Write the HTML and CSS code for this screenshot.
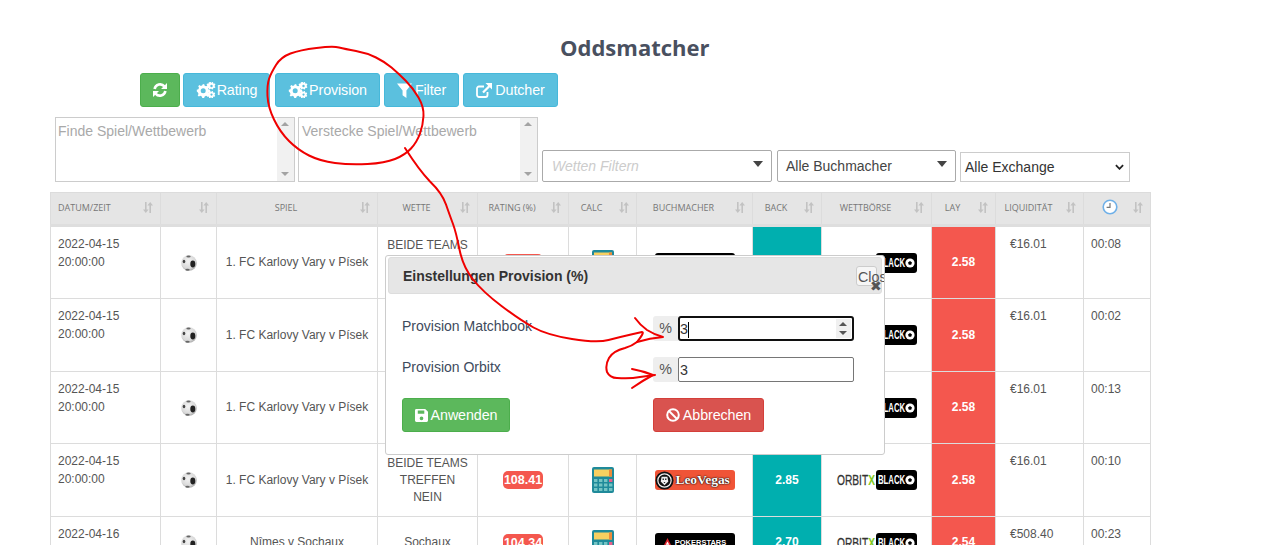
FILE: index.html
```html
<!DOCTYPE html>
<html lang="de">
<head>
<meta charset="utf-8">
<title>Oddsmatcher</title>
<link rel="stylesheet" href="styles.css">
</head>
<body>
<svg width="0" height="0" class="defs">
  <defs>
    <radialGradient id="ballfill" cx="45%" cy="40%" r="65%">
      <stop offset="0" stop-color="#f4f4f4"/>
      <stop offset="0.7" stop-color="#d9d9d9"/>
      <stop offset="1" stop-color="#9a9a9a"/>
    </radialGradient>
  </defs>
  <symbol id="calc" viewBox="0 0 22 26">
    <rect width="22" height="26" rx="2" fill="#1f8a9a"/>
    <rect x="2" y="2.500" width="18" height="7" fill="#f8d060"/>
    <rect x="17" y="2.500" width="3" height="7" fill="#ee8a3a"/>
    <g fill="#74c4c4">
      <rect x="2" y="12" width="3.400" height="3"/><rect x="7" y="12" width="3.400" height="3"/><rect x="12" y="12" width="3.400" height="3"/>
      <rect x="2" y="16.500" width="3.400" height="3"/><rect x="7" y="16.500" width="3.400" height="3"/><rect x="12" y="16.500" width="3.400" height="3"/><rect x="17" y="16.500" width="3.400" height="3"/>
      <rect x="2" y="21" width="3.400" height="3"/><rect x="7" y="21" width="3.400" height="3"/><rect x="12" y="21" width="3.400" height="3"/><rect x="17" y="21" width="3.400" height="3"/>
    </g>
    <rect x="17" y="12" width="3.400" height="3" fill="#e8608a"/>
  </symbol>
  <symbol id="ball" viewBox="0 0 16 16">
    <circle cx="8" cy="8" r="7.800" fill="url(#ballfill)"/>
    <ellipse cx="11.800" cy="9" rx="2.500" ry="3.400" fill="#222"/>
    <ellipse cx="3" cy="6.500" rx="1.300" ry="1.800" fill="#444"/>
    <ellipse cx="7.500" cy="1.500" rx="2.200" ry="1" fill="#666"/>
    <ellipse cx="6.500" cy="14.700" rx="2.200" ry="1" fill="#666"/>
  </symbol>
  <symbol id="gears" viewBox="0 0 20 16">
    <path fill="currentColor" d="M6.500 2.500l1.600-.4.6 1.600 1.400.6 1.500-.8 1.200 1.200-.8 1.500.6 1.400 1.600.6v1.800l-1.600.5-.6 1.400.8 1.500-1.200 1.200-1.500-.8-1.400.6-.6 1.500H6.300l-.5-1.500-1.400-.6-1.500.8-1.200-1.200.8-1.500-.6-1.400L.8 9.600V7.800l1.600-.6.6-1.400-.8-1.500 1.200-1.200 1.500.8 1.400-.6zM7.200 6.200a2.500 2.500 0 1 0 0 5 2.500 2.500 0 0 0 0-5z"/>
    <path fill="currentColor" d="M16 0l1.100.3.1 1 .7.5 1-.2.5 1-.7.8v.8l.7.8-.5 1-1-.2-.7.5-.1 1-1.100.3-.6-.8h-.9l-.6.8-1.100-.3-.1-1-.7-.5-.9.2-.5-1 .6-.8v-.8l-.6-.8.5-1 .9.2.7-.5.1-1L14.900 0l.6.8h.5zM15.500 2.800a1.200 1.200 0 1 0 0 2.400 1.200 1.200 0 0 0 0-2.400z"/>
    <path fill="currentColor" d="M16 9l1 .3.1.9.7.5.9-.2.5 1-.6.7v.8l.6.7-.5 1-.9-.2-.7.5-.1.9-1 .3-.6-.7h-.7l-.6.7-1-.3-.1-.9-.7-.5-.9.2-.5-1 .6-.7v-.8l-.6-.7.5-1 .9.2.7-.5.1-.9 1-.3.6.7h.7zM15.500 11.500a1.100 1.100 0 1 0 0 2.200 1.100 1.100 0 0 0 0-2.200z"/>
  </symbol>
  <symbol id="sort" viewBox="0 0 10 11">
    <path fill="none" stroke="currentColor" stroke-width="1.600" d="M2.800 0v8.500M7.200 2.500V11"/>
    <path fill="currentColor" d="M0 7.500h5.600L2.800 11zM4.400 3.500h5.600L7.200 0z"/>
  </symbol>
  <symbol id="soccer" viewBox="0 0 10 10">
    <circle cx="5" cy="5" r="4.600" fill="#fff"/>
    <path fill="#000" d="M5 3l2 1.400-.8 2.300H3.800L3 4.400z"/>
  </symbol>
  <symbol id="spade" viewBox="0 0 10 10">
    <path fill="#e0222a" d="M5 0l5 10H0z"/>
    <path fill="#fff" d="M5 4l2 3.500H3z"/>
  </symbol>
  <symbol id="lion" viewBox="0 0 20 20">
    <circle cx="10" cy="10" r="9.500" fill="#111"/>
    <circle cx="10" cy="10" r="7" fill="none" stroke="#eee" stroke-width="1.300"/>
    <path fill="#eee" d="M7 6h6l1 5-4 4-4-4z"/>
    <path fill="#111" d="M8 8h1.300v1.500H8zM10.700 8H12v1.500h-1.300zM9 11.500h2L10 13z"/>
  </symbol>
</svg>

<main class="page">
  <h1 class="title">Oddsmatcher</h1>
  <div class="toolbar">
    <button class="btn btn-green btn-refresh" type="button" aria-label="Aktualisieren">
      <svg viewBox="0 0 16 16" width="16" height="16"><path fill="none" stroke="currentColor" stroke-width="2.600" d="M2.600 7a5.600 5.600 0 0 1 9.800-2.600M13.400 9a5.600 5.600 0 0 1-9.800 2.600"/><path fill="currentColor" d="M15 1v6h-6zM1 15V9h6z"/></svg>
    </button>
    <button class="btn btn-blue btn-rating" type="button"><svg class="ico-gears"><use href="#gears"/></svg>Rating</button>
    <button class="btn btn-blue btn-provision" type="button"><svg class="ico-gears"><use href="#gears"/></svg>Provision</button>
    <button class="btn btn-blue btn-filter" type="button">
      <svg class="ico-filter" viewBox="0 0 14 14" width="15" height="15"><path fill="currentColor" d="M0 .5h14L8.800 7v7L5.200 11.500V7z"/></svg>Filter</button>
    <button class="btn btn-blue btn-dutcher" type="button">
      <svg class="ico-ext" viewBox="0 0 16 15" width="16" height="15"><path fill="none" stroke="currentColor" stroke-width="1.800" d="M11.500 9v3a2 2 0 0 1-2 2H3a2 2 0 0 1-2-2V5.500a2 2 0 0 1 2-2h5"/><path fill="currentColor" d="M9.500 0H16v6.500l-2.200-2.200-6 6-1.600-1.600 6-6z"/></svg>Dutcher</button>
  </div>

  <div class="filters">
    <div class="area"><span>Finde Spiel/Wettbewerb</span><span class="scroll"><i class="up"></i><i class="down"></i></span></div>
    <div class="area area-hide"><span>Verstecke Spiel/Wettbewerb</span><span class="scroll"><i class="up"></i><i class="down"></i></span></div>
    <div class="dd dd-wetten"><em>Wetten Filtern</em><i class="caret"></i></div>
    <div class="dd dd-buch"><span>Alle Buchmacher</span><i class="caret"></i></div>
    <div class="dd dd-ex"><span>Alle Exchange</span><svg viewBox="0 0 10 6" width="9" height="6"><path fill="none" stroke="#222" stroke-width="2" d="M1 1l4 4 4-4"/></svg></div>
  </div>

  <table class="odds">
    <colgroup>
      <col class="c1"><col class="c2"><col class="c3"><col class="c4"><col class="c5"><col class="c6"><col class="c7"><col class="c8"><col class="c9"><col class="c10"><col class="c11"><col class="c12">
    </colgroup>
    <thead>
      <tr>
        <th class="left">DATUM/ZEIT<svg class="sort"><use href="#sort"/></svg></th>
        <th><svg class="sort"><use href="#sort"/></svg></th>
        <th>SPIEL<svg class="sort"><use href="#sort"/></svg></th>
        <th>WETTE<svg class="sort"><use href="#sort"/></svg></th>
        <th>RATING (%)<svg class="sort"><use href="#sort"/></svg></th>
        <th>CALC<svg class="sort"><use href="#sort"/></svg></th>
        <th>BUCHMACHER<svg class="sort"><use href="#sort"/></svg></th>
        <th>BACK<svg class="sort"><use href="#sort"/></svg></th>
        <th>WETTBÖRSE<svg class="sort"><use href="#sort"/></svg></th>
        <th>LAY<svg class="sort"><use href="#sort"/></svg></th>
        <th>LIQUIDITÄT<svg class="sort"><use href="#sort"/></svg></th>
        <th><svg class="clock" viewBox="0 0 16 16"><circle cx="8" cy="8" r="6.800" fill="#fff" stroke="#6fb0e8" stroke-width="1.600"/><path fill="none" stroke="#777" stroke-width="1.200" d="M8 4v4.400H4.600"/></svg><svg class="sort"><use href="#sort"/></svg></th>
      </tr>
    </thead>
    <tbody>
      <tr class="r1">
        <td class="top">2022-04-15<br>20:00:00</td><td><svg class="ball"><use href="#ball"/></svg></td><td>1. FC Karlovy Vary v Písek</td><td>BEIDE TEAMS<br>TREFFEN<br>NEIN</td><td><span class="rating">108.41</span></td><td><svg class="calc"><use href="#calc"/></svg></td><td><span class="logo logo-ps"><svg class="spade"><use href="#spade"/></svg>POKERSTARS</span></td><td class="back">2.85</td><td><span class="orbit"><span class="o-name"><span class="o-name-t">ORBIT<b>X</b></span></span><span class="o-black"><span class="o-black-t">BLACK</span><svg class="soccer"><use href="#soccer"/></svg></span></span></td><td class="lay">2.58</td><td class="top liq">€16.01</td><td class="top tm">00:08</td>
      </tr>
      <tr class="r2">
        <td class="top">2022-04-15<br>20:00:00</td><td><svg class="ball"><use href="#ball"/></svg></td><td>1. FC Karlovy Vary v Písek</td><td>BEIDE TEAMS<br>TREFFEN<br>NEIN</td><td><span class="rating">108.41</span></td><td><svg class="calc"><use href="#calc"/></svg></td><td><span class="logo logo-lv"><svg class="lion"><use href="#lion"/></svg>LeoVegas</span></td><td class="back">2.85</td><td><span class="orbit"><span class="o-name"><span class="o-name-t">ORBIT<b>X</b></span></span><span class="o-black"><span class="o-black-t">BLACK</span><svg class="soccer"><use href="#soccer"/></svg></span></span></td><td class="lay">2.58</td><td class="top liq">€16.01</td><td class="top tm">00:02</td>
      </tr>
      <tr class="r3">
        <td class="top">2022-04-15<br>20:00:00</td><td><svg class="ball"><use href="#ball"/></svg></td><td>1. FC Karlovy Vary v Písek</td><td>BEIDE TEAMS<br>TREFFEN<br>NEIN</td><td><span class="rating">108.41</span></td><td><svg class="calc"><use href="#calc"/></svg></td><td><span class="logo logo-lv"><svg class="lion"><use href="#lion"/></svg>LeoVegas</span></td><td class="back">2.85</td><td><span class="orbit"><span class="o-name"><span class="o-name-t">ORBIT<b>X</b></span></span><span class="o-black"><span class="o-black-t">BLACK</span><svg class="soccer"><use href="#soccer"/></svg></span></span></td><td class="lay">2.58</td><td class="top liq">€16.01</td><td class="top tm">00:13</td>
      </tr>
      <tr class="r4">
        <td class="top">2022-04-15<br>20:00:00</td><td><svg class="ball"><use href="#ball"/></svg></td><td>1. FC Karlovy Vary v Písek</td><td>BEIDE TEAMS<br>TREFFEN<br>NEIN</td><td><span class="rating">108.41</span></td><td><svg class="calc"><use href="#calc"/></svg></td><td><span class="logo logo-lv"><svg class="lion"><use href="#lion"/></svg>LeoVegas</span></td><td class="back">2.85</td><td><span class="orbit"><span class="o-name"><span class="o-name-t">ORBIT<b>X</b></span></span><span class="o-black"><span class="o-black-t">BLACK</span><svg class="soccer"><use href="#soccer"/></svg></span></span></td><td class="lay">2.58</td><td class="top liq">€16.01</td><td class="top tm">00:10</td>
      </tr>
      <tr class="r5">
        <td class="top">2022-04-16</td><td><svg class="ball"><use href="#ball"/></svg></td><td>Nîmes v Sochaux</td><td>Sochaux</td><td><span class="rating">104.34</span></td><td><svg class="calc"><use href="#calc"/></svg></td><td><span class="logo logo-ps"><svg class="spade"><use href="#spade"/></svg>POKERSTARS</span></td><td class="back">2.70</td><td><span class="orbit"><span class="o-name"><span class="o-name-t">ORBIT<b>X</b></span></span><span class="o-black"><span class="o-black-t">BLACK</span><svg class="soccer"><use href="#soccer"/></svg></span></span></td><td class="lay">2.54</td><td class="top liq">€508.40</td><td class="top tm">00:23</td>
      </tr>
    </tbody>
  </table>
</main>

<section class="modal">
  <header class="modal-head">
    <h2>Einstellungen Provision (%)</h2>
    <span class="close">Close</span>
    <span class="close-x">✖</span>
  </header>
  <div class="modal-body">
    <div class="form-row">
      <label>Provision Matchbook</label>
      <div class="group"><span class="addon">%</span><div class="field focus">3<i class="cursor"></i><span class="spin"><i class="up"></i><i class="down"></i></span></div></div>
    </div>
    <div class="form-row">
      <label>Provision Orbitx</label>
      <div class="group"><span class="addon">%</span><div class="field">3</div></div>
    </div>
    <div class="actions">
      <div><button class="btn btn-green btn-apply" type="button"><svg viewBox="0 0 14 14" width="13" height="13"><path fill="currentColor" fill-rule="evenodd" d="M1.500 0H11l3 3v9.500a1.500 1.500 0 0 1-1.500 1.500h-11A1.500 1.500 0 0 1 0 12.500v-11A1.500 1.500 0 0 1 1.500 0zM3 1.500V5h7V1.500zM7 8a2 2 0 1 0 0 4 2 2 0 0 0 0-4z"/></svg>Anwenden</button></div>
      <div><button class="btn btn-red btn-cancel" type="button"><svg viewBox="0 0 14 14" width="14" height="14"><circle cx="7" cy="7" r="5.800" fill="none" stroke="currentColor" stroke-width="2"/><path stroke="currentColor" stroke-width="2" d="M3 3l8 8"/></svg>Abbrechen</button></div>
    </div>
  </div>
</section>

<svg class="scribble" viewBox="0 0 1284 545" width="1284" height="545">
  <g fill="none" stroke="#f00000" stroke-width="2" stroke-linejoin="round" stroke-linecap="round">
    <path d="M339 47.500Q345 49 356 51Q367 53 376 57.500Q385 62 391.500 67.500Q398 73 405.500 80.500Q413 88 418.500 97.500Q424 107 423.500 116Q423 125 420 133.500Q417 142 411 148.500Q405 155 395 159Q385 163 367.500 164Q350 165 335 163Q320 161 309 155.500Q298 150 289 141Q280 132 274 119.500Q268 107 267.500 96Q267 85 269 79Q271 73 276 65Q281 57 290.500 53.500Q300 50 316.500 48Q333 46 339 47.500"/>
    <path d="M405 148Q419 170 430 181.500Q442 193 446 204.500Q450 216 453 224Q456 232 459.500 249.500Q463 267 473 279.500Q483 292 501.500 306Q520 320 533.500 327.500Q547 335 572 339Q597 343 608.500 340Q620 337 631 334.500L642 332Q645 332 637 342Q632 346 625 348Q613 351 609 358Q605 365 607 372Q610 378 617 378Q630 379 640 377L655 375"/>
    <path d="M635 318Q640 325 647 330Q655 335 663 337Q650 338 637 342"/>
    <path d="M632 369Q643 371 653 375Q642 381 632 388"/>
  </g>
</svg>
</body>
</html>
```
FILE: styles.css
```css
* { box-sizing: border-box; }
html, body { margin: 0; padding: 0; overflow: hidden; }
body {
  width: 1284px;
  height: 545px;
  position: relative;
  background: #fff;
  font-family: "Liberation Sans", Arial, sans-serif;
  font-size: 12px;
  color: #555;
}
.defs { position: absolute; }

.page { padding: 35px 0 0 50px; width: 1150px; }
.title {
  margin: 0;
  padding-left: 510px;
  font: 700 22px/25px "Open Sans", sans-serif;
  color: #49505f;
  height: 38px;
}

.btn {
  display: inline-flex;
  align-items: center;
  justify-content: center;
  height: 34px;
  border: 1px solid transparent;
  border-radius: 3px;
  padding: 0;
  color: #fff;
  font: 14.300px "Liberation Sans", Arial, sans-serif;
  letter-spacing: -.1px;
}
.btn-green { background: #5cb85c; border-color: #4cae4c; }
.btn-blue { background: #5bc0de; border-color: #46b8da; }
.btn-red { background: #d9534f; border-color: #d43f3a; }

.toolbar { display: flex; padding-left: 90px; height: 44px; }
.btn-refresh { width: 40px; }
.btn-rating { width: 87px; margin-left: 3px; }
.btn-provision { width: 105px; margin-left: 5px; }
.btn-filter { width: 75px; margin-left: 4px; }
.btn-dutcher { width: 95px; margin-left: 4px; }
.ico-gears { width: 20px; height: 16px; margin-right: 1px; }
.ico-filter, .ico-ext { margin-right: 3px; }

.filters { display: flex; align-items: flex-end; height: 65px; padding-left: 5px; margin-bottom: 10px; }
.area {
  width: 240px;
  height: 65px;
  margin-right: 3px;
  border: 1px solid #ccc;
  position: relative;
  font-size: 14px;
  color: #a9a9a9;
  padding: 5px 2px;
}
.area-hide { margin-right: 4px; padding-left: 3px; }
.scroll { position: absolute; top: 0; right: 0; bottom: 0; width: 17px; background: #f1f1f1; }
.up, .down { position: absolute; left: 4px; width: 0; height: 0; border: 4px solid transparent; }
.scroll .up { top: 4px; border-bottom: 4px solid #a3a3a3; border-top: 0; }
.scroll .down { bottom: 5px; border-top: 4px solid #a3a3a3; border-bottom: 0; }

.dd {
  height: 32px;
  position: relative;
  border: 1px solid #aaa;
  border-radius: 2px;
  display: flex;
  align-items: center;
  padding-left: 9px;
  font-size: 14px;
  color: #444;
  margin-right: 4px;
}
.dd em { color: #ccc; }
.caret {
  position: absolute; right: 8px; top: 10px; width: 0; height: 0;
  border-left: 5px solid transparent; border-right: 5px solid transparent; border-top: 6px solid #444;
}
.dd-wetten { width: 230px; margin-right: 5px; }
.dd-buch { width: 179px; padding-left: 8px; }
.dd-ex {
  width: 170px; height: 30px; border-color: #ccc; border-radius: 0; padding-left: 4px;
  justify-content: space-between; padding-right: 5px; color: #333;
}

.odds { border-collapse: collapse; table-layout: fixed; width: 1100px; color: #555; }
.c1 { width: 110px; } .c2 { width: 56px; } .c3 { width: 161px; } .c4 { width: 100px; }
.c5 { width: 91px; } .c6 { width: 68px; } .c7 { width: 116px; } .c8 { width: 69px; }
.c9 { width: 110px; } .c10 { width: 64px; } .c11 { width: 88px; } .c12 { width: 67px; }
.odds th {
  height: 33px;
  background: #e5e5e5;
  border: 1px solid #dcdcdc;
  border-bottom-width: 3px;
  border-bottom-color: #dedede;
  font: 400 9px "Open Sans", sans-serif;
  color: #777;
  position: relative;
  padding: 0 22px 3px 0;
  text-align: center;
}
.odds th.left { text-align: left; padding-left: 7px; }
.sort { position: absolute; right: 7px; top: 9px; width: 10px; height: 11px; color: #c2c2c2; }
.clock { width: 16px; height: 16px; vertical-align: middle; margin-left: 8px; }
.odds td {
  border: 1px solid #dcdcdc;
  text-align: center;
  vertical-align: middle;
  line-height: 17px;
  padding: 0 2px;
  white-space: nowrap;
  overflow: hidden;
}
.r1 td { height: 73px; } .r2 td { height: 73px; } .r3 td { height: 72px; } .r4 td { height: 73px; } .r5 td { height: 52px; }
.odds td.top { text-align: left; vertical-align: top; padding: 8px 0 0 7px; line-height: 18px; }
.odds td.liq { padding-left: 14px; }
.odds td.back { background: #00afaf; color: #fff; font-weight: 700; }
.odds td.lay { background: #f4574e; color: #fff; font-weight: 700; }
.rating {
  display: inline-block;
  background: #f4574e;
  color: #fff;
  font-weight: 700;
  font-size: 12.500px;
  border-radius: 5px;
  width: 40px;
  height: 18px;
  line-height: 18px;
}
.ball { width: 16px; height: 16px; vertical-align: middle; }
.calc { width: 22px; height: 26px; vertical-align: middle; }

.orbit { display: inline-flex; align-items: center; width: 80px; height: 20px; vertical-align: middle; }
.o-name { display: block; width: 39px; height: 20px; text-align: left; }
.o-name-t {
  display: inline-block;
  font: 400 15px/20px "Liberation Sans", sans-serif;
  color: #333;
  white-space: nowrap;
  -webkit-text-stroke: .3px #333;
  transform: scaleX(.68);
  transform-origin: 0 50%;
}
.o-name-t b { color: #7ec820; -webkit-text-stroke: 0; }
.o-black {
  display: flex;
  align-items: center;
  justify-content: space-between;
  width: 41px;
  height: 20px;
  background: #000;
  border-radius: 3px;
  padding: 0 2px;
}
.o-black-t {
  display: block;
  width: 27px;
  color: #fff;
  font: 700 12.500px/20px "Liberation Sans", sans-serif;
  white-space: nowrap;
  text-align: left;
  transform: scaleX(.62);
  transform-origin: 0 50%;
}
.soccer { width: 10px; height: 10px; flex: none; }

.logo {
  display: inline-flex;
  align-items: center;
  justify-content: center;
  width: 80px;
  height: 20px;
  border-radius: 3px;
  vertical-align: middle;
  overflow: hidden;
}
.logo-ps { background: #000; color: #fff; font-size: 7.500px; font-weight: 700; gap: 3px; }
.spade { width: 9px; height: 9px; flex: none; }
.logo-lv { background: #f05437; color: #fff; font: 700 13.500px "Liberation Serif", serif; gap: 2px; justify-content: flex-start; text-shadow: 0 0 2px #000, 0 0 1px #000; letter-spacing: -.1px; }
.lion { width: 19px; height: 19px; flex: none; }

.modal {
  position: absolute;
  left: 385px;
  top: 255px;
  width: 500px;
  height: 200px;
  background: #fff;
  border: 1px solid #ccc;
  border-radius: 3px;
  padding: 1px 2px 2px;
  color: #333;
}
.modal-head {
  height: 37px;
  background: #e6e6e6;
  border: 1px solid #ddd;
  border-radius: 3px;
  position: relative;
  display: flex;
  align-items: center;
  padding-left: 14px;
}
.modal-head h2 { margin: 0; font: 700 14px "Liberation Sans", sans-serif; color: #333; }
.close {
  position: absolute; left: 467px; top: 8px; width: 21px; height: 20px;
  background: #f6f6f6; border: 1px solid #ccc; border-radius: 3px;
  font-size: 14.300px; line-height: 20px; color: #555; padding-left: 1px;
  white-space: nowrap;
  clip-path: inset(-2px -7px -2px -2px);
}
.close-x { position: absolute; left: 481px; top: 21px; font-size: 14px; line-height: 14px; color: #555; font-family: "DejaVu Sans", sans-serif; }
.modal-body { padding: 22px 14px 0; position: relative; }
.form-row { display: grid; grid-template-columns: 251px 1fr; height: 41px; }
.form-row label { font-size: 14px; line-height: 20px; color: #3d4a5c; }
.group { display: flex; height: 25px; }
.addon { width: 25px; background: #eee; color: #555; font-size: 14.300px; text-align: center; line-height: 25px; height: 25px; border-radius: 3px 0 0 3px; }
.field {
  width: 176px; height: 25px; border: 1px solid #767676; border-radius: 2px; position: relative;
  font-size: 14.300px; line-height: 24px; color: #333; padding-left: 1px;
}
.field.focus { border: 2px solid #101010; border-radius: 3px; line-height: 22px; padding-left: 0; }
.cursor { display: inline-block; width: 1px; height: 16px; background: #000; vertical-align: middle; }
.spin { position: absolute; right: 1px; top: 1px; bottom: 1px; width: 15px; background: #f0f0f0; }
.spin .up { left: 3px; top: 3px; border-bottom: 4px solid #555; border-top: 0; }
.spin .down { left: 3px; bottom: 3px; border-top: 4px solid #555; border-bottom: 0; }
.actions { display: grid; grid-template-columns: 251px 1fr; }
.btn-apply { width: 108px; gap: 3px; }
.btn-cancel { width: 111px; gap: 3px; }

.scribble { position: absolute; left: 0; top: 0; pointer-events: none; }
```
